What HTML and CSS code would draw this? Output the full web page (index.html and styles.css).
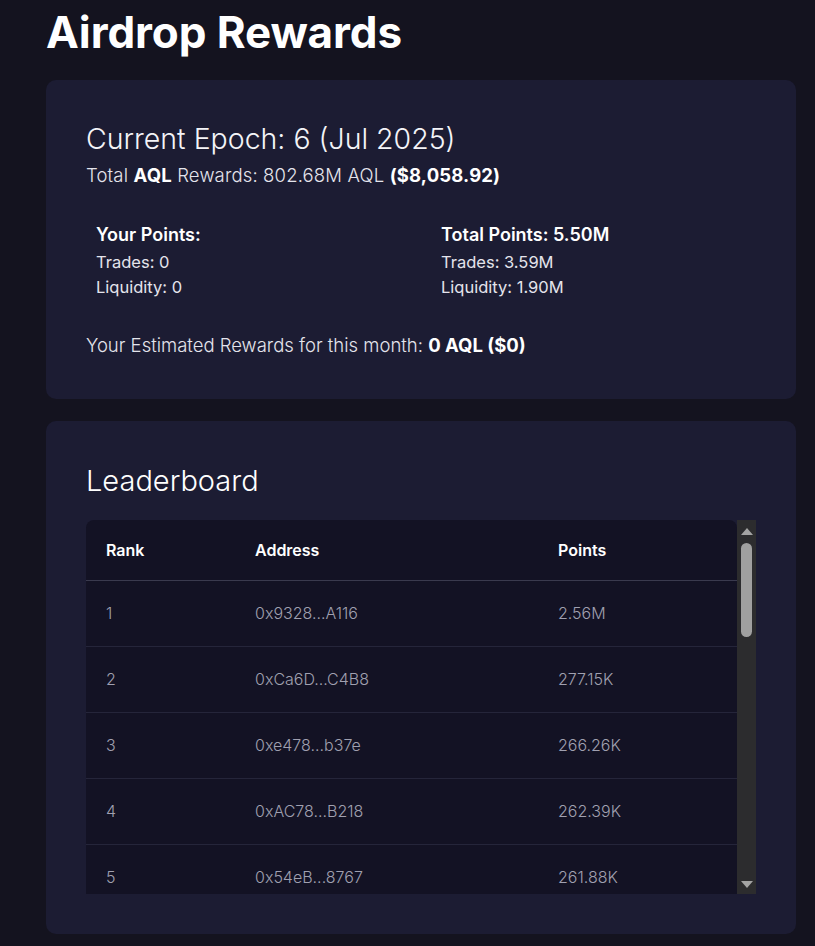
FILE: index.html
```html
<!DOCTYPE html>
<html lang="en">
<head>
<meta charset="utf-8">
<title>Airdrop Rewards</title>
<link rel="stylesheet" href="styles.css">
</head>
<body>
<div class="page">
  <h1 class="page-title">Airdrop Rewards</h1>

  <section class="card card-epoch">
    <h2 class="epoch">Current Epoch: 6 (Jul 2025)</h2>
    <p class="total">Total <b>AQL</b> Rewards: 802.68M AQL <b>($8,058.92)</b></p>

    <div class="points">
      <div class="points-col">
        <div class="points-head">Your Points:</div>
        <div class="points-line">Trades: 0</div>
        <div class="points-line">Liquidity: 0</div>
      </div>
      <div class="points-col">
        <div class="points-head">Total Points: 5.50M</div>
        <div class="points-line">Trades: 3.59M</div>
        <div class="points-line">Liquidity: 1.90M</div>
      </div>
    </div>

    <p class="estimate">Your Estimated Rewards for this month: <b>0 AQL ($0)</b></p>
  </section>

  <section class="card card-board">
    <h2 class="board-title">Leaderboard</h2>
    <div class="board-scroll">
      <div class="board-viewport">
        <table class="board">
          <thead>
            <tr><th class="c-rank">Rank</th><th class="c-addr">Address</th><th class="c-pts">Points</th></tr>
          </thead>
          <tbody>
            <tr><td>1</td><td>0x9328...A116</td><td>2.56M</td></tr>
            <tr><td>2</td><td>0xCa6D...C4B8</td><td>277.15K</td></tr>
            <tr><td>3</td><td>0xe478...b37e</td><td>266.26K</td></tr>
            <tr><td>4</td><td>0xAC78...B218</td><td>262.39K</td></tr>
            <tr><td>5</td><td>0x54eB...8767</td><td>261.88K</td></tr>
          </tbody>
        </table>
      </div>
      <div class="scrollbar" aria-hidden="true">
        <span class="sb-arrow sb-up"></span>
        <span class="sb-track"><span class="sb-thumb"></span></span>
        <span class="sb-arrow sb-down"></span>
      </div>
    </div>
  </section>
</div>
</body>
</html>
```

FILE: styles.css
```css
* { box-sizing: border-box; }

html, body {
  margin: 0;
  padding: 0;
  background: #14131f;
}

body {
  font-family: Inter, "Noto Sans", sans-serif;
  color: #e4e4ec;
}

.page {
  padding: 6px 19px 13px 46px;
}

.page-title {
  margin: 0 0 22px;
  font-size: 44px;
  line-height: 52px;
  font-weight: 700;
  color: #ffffff;
  letter-spacing: -0.1px;
}

.card {
  background: #1c1c33;
  border-radius: 10px;
  padding: 40px;
  margin-bottom: 22px;
}

.card-epoch {
  padding-top: 41px;
  padding-bottom: 41px;
}

.card-board {
  margin-bottom: 0;
}

.epoch {
  margin: 0;
  font-size: 28.5px;
  line-height: 36px;
  font-weight: 300;
  color: #f4f4f8;
}

.total {
  margin: 6px 0 0;
  font-size: 18.5px;
  line-height: 24px;
  font-weight: 300;
  letter-spacing: 0.15px;
}

.total b, .estimate b {
  font-weight: 700;
  color: #ffffff;
}

.points {
  display: grid;
  grid-template-columns: 345px 1fr;
  margin-top: 33px;
  padding-left: 10px;
}

.points-head {
  font-size: 18px;
  line-height: 30px;
  font-weight: 600;
  color: #ffffff;
}

.points-line {
  font-size: 16.5px;
  line-height: 25px;
  font-weight: 400;
}

.estimate {
  margin: 32px 0 0;
  font-size: 18.5px;
  line-height: 26px;
  font-weight: 300;
}

.board-title {
  margin: 0 0 19px;
  font-size: 29px;
  line-height: 40px;
  font-weight: 300;
  color: #ffffff;
}

.board-scroll {
  display: flex;
  height: 374px;
}

.board-viewport {
  flex: 1;
  overflow: hidden;
  background: #131224;
  border-radius: 8px 8px 0 0;
}

.board {
  width: 100%;
  border-collapse: collapse;
  table-layout: fixed;
}

.c-rank { width: 149px; }
.c-addr { width: 303px; }

.board th {
  height: 60px;
  padding: 0 20px;
  text-align: left;
  font-size: 16px;
  font-weight: 600;
  color: #ffffff;
  border-bottom: 1px solid #3a3a4e;
}

.board td {
  height: 66px;
  padding: 0 20px;
  font-size: 16px;
  font-weight: 300;
  color: #a0a0b0;
  border-bottom: 1px solid #25253a;
}

.scrollbar {
  width: 19px;
  flex: none;
  background: #2c2c2e;
  display: flex;
  flex-direction: column;
  align-items: center;
}

.sb-arrow {
  width: 0;
  height: 0;
  border-left: 6px solid transparent;
  border-right: 6px solid transparent;
  flex: none;
}

.sb-up {
  margin-top: 8px;
  border-bottom: 7px solid #a3a3a3;
}

.sb-down {
  margin-bottom: 6px;
  border-top: 7px solid #a3a3a3;
}

.sb-track {
  flex: 1;
  width: 100%;
  display: flex;
  justify-content: center;
  padding-top: 8px;
}

.sb-thumb {
  width: 11px;
  height: 94px;
  border-radius: 6px;
  background: #a0a0a0;
}
```
